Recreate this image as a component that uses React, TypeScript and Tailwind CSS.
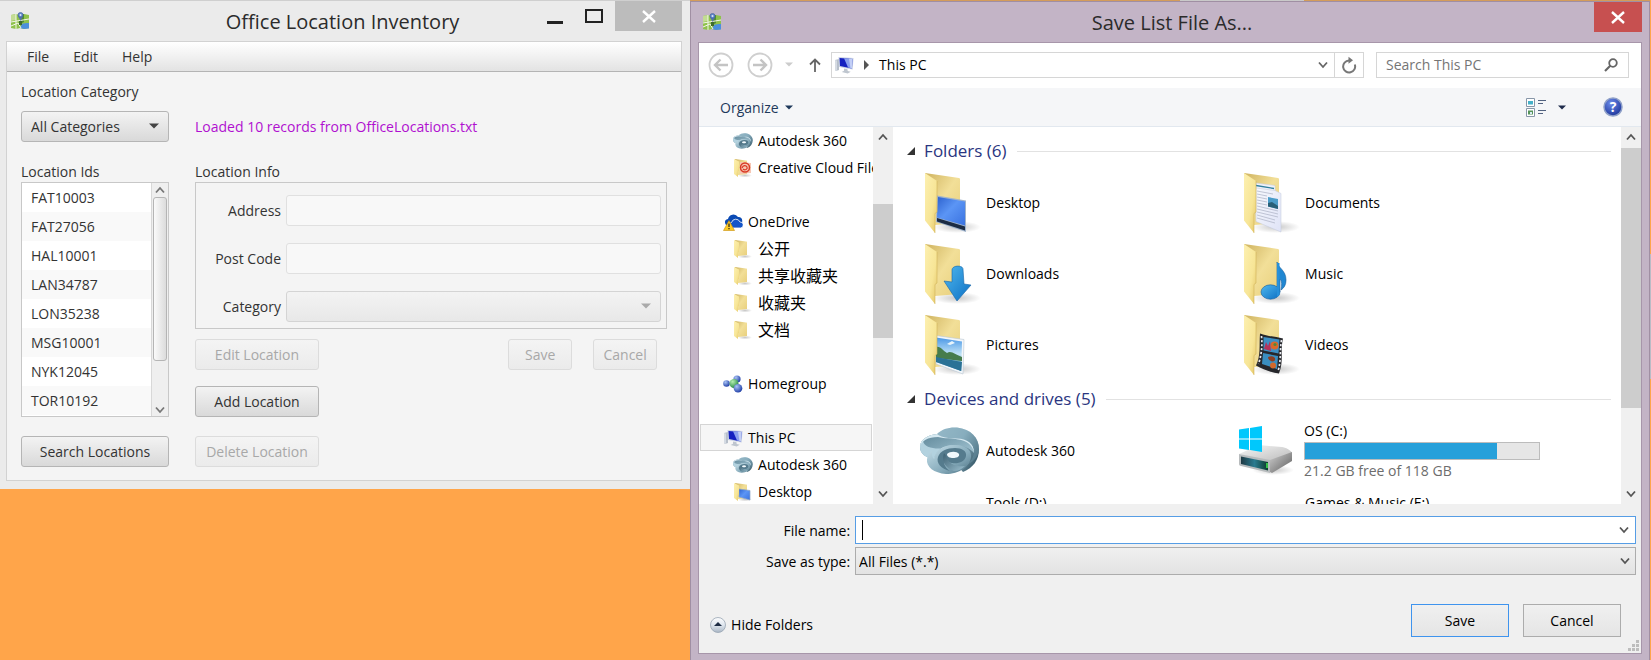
import { useState, type ReactNode } from "react";

const LOCATION_IDS = ["FAT10003", "FAT27056", "HAL10001", "LAN34787", "LON35238", "MSG10001", "NYK12045", "TOR10192"];

/* ---------- shared gradients ---------- */

function Gradients() {
  return (
    <svg className="absolute h-0 w-0" aria-hidden="true">
      <defs>
        <linearGradient id="flap" x1="0" y1="0" x2="1" y2="1">
          <stop offset="0" stopColor="#fdf0b0" />
          <stop offset="0.6" stopColor="#f7e596" />
          <stop offset="1" stopColor="#e3c566" />
        </linearGradient>
        <linearGradient id="back" x1="0" y1="0" x2="1" y2="1">
          <stop offset="0" stopColor="#cfb35f" />
          <stop offset="0.5" stopColor="#f2df98" />
          <stop offset="1" stopColor="#e8cf7c" />
        </linearGradient>
        <linearGradient id="screen" x1="0" y1="0" x2="1" y2="1">
          <stop offset="0" stopColor="#2d62cf" />
          <stop offset="0.45" stopColor="#5b95f5" />
          <stop offset="1" stopColor="#3a72e0" />
        </linearGradient>
        <linearGradient id="arrow" x1="0" y1="0" x2="1" y2="1">
          <stop offset="0" stopColor="#4fb8ee" />
          <stop offset="1" stopColor="#0c6fc4" />
        </linearGradient>
        <linearGradient id="sky" x1="0" y1="0" x2="0" y2="1">
          <stop offset="0" stopColor="#4a97e6" />
          <stop offset="0.5" stopColor="#c2e4f7" />
          <stop offset="1" stopColor="#2f7fae" />
        </linearGradient>
        <linearGradient id="page" x1="0" y1="0" x2="1" y2="1">
          <stop offset="0" stopColor="#f6f8fd" />
          <stop offset="1" stopColor="#dfe3f7" />
        </linearGradient>
        <linearGradient id="swirlBack" x1="0" y1="0" x2="1" y2="0.600">
          <stop offset="0" stopColor="#b4d3e0" />
          <stop offset="0.55" stopColor="#9cc0cf" />
          <stop offset="1" stopColor="#3f6272" />
        </linearGradient>
        <linearGradient id="swirlIn" x1="0" y1="0" x2="1" y2="1">
          <stop offset="0" stopColor="#5f8799" />
          <stop offset="1" stopColor="#a9cad8" />
        </linearGradient>
        <linearGradient id="swirlFront" x1="0" y1="0" x2="1" y2="1">
          <stop offset="0" stopColor="#c9e1eb" />
          <stop offset="0.6" stopColor="#86abbb" />
          <stop offset="1" stopColor="#4d7283" />
        </linearGradient>
        <linearGradient id="swirlDark" x1="0" y1="0" x2="1" y2="1">
          <stop offset="0" stopColor="#3c6072" />
          <stop offset="1" stopColor="#9dc0cf" />
        </linearGradient>
        <linearGradient id="monitor" x1="0" y1="0" x2="1" y2="0">
          <stop offset="0" stopColor="#0a12a0" />
          <stop offset="0.55" stopColor="#1b28d8" />
          <stop offset="1" stopColor="#86a0f2" />
        </linearGradient>
        <radialGradient id="help" cx="0.4" cy="0.3" r="0.8">
          <stop offset="0" stopColor="#6d8cea" />
          <stop offset="1" stopColor="#142c92" />
        </radialGradient>
        <linearGradient id="driveTop" x1="0" y1="0" x2="1" y2="1">
          <stop offset="0" stopColor="#f7f7f7" />
          <stop offset="1" stopColor="#b9b9b9" />
        </linearGradient>
        <linearGradient id="driveSide" x1="0" y1="0" x2="1" y2="1">
          <stop offset="0" stopColor="#cfcfcf" />
          <stop offset="1" stopColor="#5c5c5c" />
        </linearGradient>
        <linearGradient id="driveFace" x1="0" y1="0" x2="1" y2="0">
          <stop offset="0" stopColor="#1f3a44" />
          <stop offset="0.5" stopColor="#2a7b90" />
          <stop offset="1" stopColor="#0d3a2c" />
        </linearGradient>
        <radialGradient id="shade">
          <stop offset="0" stopColor="#000" stopOpacity="0.22" />
          <stop offset="1" stopColor="#000" stopOpacity="0" />
        </radialGradient>
        <radialGradient id="blueBall" cx="0.35" cy="0.3" r="0.8">
          <stop offset="0" stopColor="#a9c4f5" />
          <stop offset="1" stopColor="#12319f" />
        </radialGradient>
        <radialGradient id="greenBall" cx="0.35" cy="0.3" r="0.8">
          <stop offset="0" stopColor="#b4eeb0" />
          <stop offset="1" stopColor="#17803a" />
        </radialGradient>
        <linearGradient id="knob" x1="0" y1="0" x2="0" y2="1">
          <stop offset="0" stopColor="#fdfdfe" />
          <stop offset="0.5" stopColor="#dfe6ee" />
          <stop offset="1" stopColor="#a9b6c4" />
        </linearGradient>
      </defs>
    </svg>
  );
}

/* ---------- icons ---------- */

function MapIcon() {
  return (
    <svg viewBox="0 0 20 18" className="h-[18px] w-5 shrink-0" aria-hidden="true">
      <path d="M1 3l5-1 4 1 4-1 5 1v13l-5 1-4-1-4 1-5-1z" fill="#8fc24c" />
      <path d="M1 3l5-1v6L1 9z" fill="#c3dc93" />
      <path d="M10 3l4-1v8l-4 2z" fill="#4f8a34" />
      <path d="M12 12c2-1 4-1 7-1v5.500l-5 .5-4-1z" fill="#4c8fdc" />
      <path d="M1 10l18-3M6 2v15M1 14l7-3 3 5" stroke="#f4f6ea" strokeWidth="1" fill="none" />
      <path d="M10.500 9L8.200 4.500h4.600z" fill="#5672a8" />
      <circle cx="10.500" cy="2.900" r="2.500" fill="#5f86cc" stroke="#3d5c98" strokeWidth="0.600" />
      <circle cx="10.500" cy="2.900" r="1" fill="#dfe8f7" />
      <path d="M9 9h3v4H9z" fill="#3f6b2c" />
    </svg>
  );
}

function PcIcon() {
  return (
    <svg viewBox="0 0 20 18" className="h-[18px] w-5 shrink-0" aria-hidden="true">
      <path d="M1 4l4-1v11l-3 1-1-1z" fill="#b7bfca" />
      <path d="M1 4l2 .500v10.500l-2-1z" fill="#d5dbe3" />
      <path d="M4.500 1l15 1-.8 11.500L5 11z" fill="#c9d1e4" />
      <path d="M5.500 2l13 1-.6 9.500L6 10z" fill="#1420c0" />
      <path d="M10 2.300l8.500.7-.6 9.500-3.900-.9z" fill="#8aa0ee" />
      <path d="M15 2.700l3.500.3-.6 9.500-1.400-.3z" fill="#c3cff6" />
      <path d="M10 12.500l3.500.8.2 1.700 3 .7-3 1.800-6-1.500 2.300-1.200z" fill="#bfc6cf" />
    </svg>
  );
}

function SwirlIcon({ className }: { className: string }) {
  return (
    <svg viewBox="0 0 60 48" className={className} aria-hidden="true">
      <path d="M17 7C22 2 29 0 37 0.500 51 2 59 11 59 22c0 11-6 19-16 23L30 30z" fill="url(#swirlBack)" />
      <path d="M17 7c7 5 15 4 22 5 8 1 14 5 15 12 0 6-3 11-8 14 6-2 13-8 13-16C59 11 51 2 37 .5 29 0 22 2 17 7z" fill="#6f97a9" opacity="0.450" />
      <path d="M17 7C8 8 0 12 0 20c0 7 6 11 14 12 2-9 10-14 20-14 9 0 16 3 20 8 0-10-7-14-17-14.500C29 11 22 11 17 7z" fill="url(#swirlIn)" />
      <path d="M3 13c-2 2-3 4-3 7 0 7 6 11 14 12 1-5 4-8 7-10.500C13 22 3 20 3 13z" fill="#b3d2df" />
      <path d="M17 7C8 8 0 12 0 20c1-6 8-10 18-10 7 2 14 1 20 2.500 9 1 15 6 16 13.500 0-10-7-14-17-14.500C29 11 22 11 17 7z" fill="#d6e9f1" />
      <path d="M14 32c1-8 9-14 20-14 10 0 18 4 17 12-1 10-12 17-25 17C14 46 6 40 7 32c1-4 3-7 6-9-2 3-1 7 1 9z" fill="url(#swirlFront)" />
      <path d="M18 30c2-6 9-9 17-9 7 0 12 3 11 8-1 6-8 8-14 7-4 0-7-3-6-7-4 5-2 11 4 15-9-2-14-8-12-14z" fill="#557b8d" />
      <path d="M24 26c-3 8 1 15 10 18 4 0 8-2 11-5-7 1-14-1-17-6-1-2-2-5-4-7z" fill="url(#swirlDark)" />
      <path d="M27 27c3-3 10-3 12 0 1 3-3 4-6 4s-6-1-6-4z" fill="#f2f9fc" />
    </svg>
  );
}

type FolderKind = "desktop" | "downloads" | "pictures" | "documents" | "music" | "videos";

function FolderIcon({ kind }: { kind: FolderKind }) {
  return (
    <svg viewBox="0 0 61 62" className="h-[62px] w-[61px] shrink-0" aria-hidden="true">
      <ellipse cx="32" cy="55" rx="24" ry="6" fill="url(#shade)" />
      <path d="M0 1l34 5c1 0 1 1 1 2v43l-25 2z" fill="url(#back)" />
      {kind === "desktop" && (
        <g>
          <path d="M12 23.500l29 5V60L11 50z" fill="#9fb3cc" />
          <path d="M13 25l27 4.500v24L12 45.500z" fill="url(#screen)" />
          <path d="M12 46l28 8.500v4L12 49.500z" fill="#1c2c44" />
        </g>
      )}
      {kind === "downloads" && (
        <path d="M27 27c0-5 11-5 11-1l1 15 7 1-14 16-13-20 8 1z" fill="url(#arrow)" stroke="#1565a8" strokeWidth="0.600" />
      )}
      {kind === "pictures" && (
        <g>
          <path d="M11 21.500l28 4-1 34.500-27-10z" fill="#f2f6fa" stroke="#b9c6d2" strokeWidth="0.600" />
          <path d="M11 23.500l26 4-.8 29.500L11 48z" fill="url(#sky)" />
          <path d="M11 33c5-1 7 4 11 6 4-3 9 2 15 4v4L11 44z" fill="#467c4c" />
          <path d="M11 43l26 5-.8 9L11 48z" fill="#2b7296" />
          <path d="M22 30l5-3 3 2-5 2z" fill="#e9f5fc" />
        </g>
      )}
      {kind === "documents" && (
        <g>
          <path d="M12 11l19 2.500 1 30H12z" fill="#eef1fa" stroke="#c2c9d8" strokeWidth="0.500" />
          <path d="M12 12.800l18 3v1.400l-18-3z" fill="#2f7f9e" />
          <path d="M12 16l19 2.500 6 3V60L12 49.500z" fill="url(#page)" stroke="#c3c8da" strokeWidth="0.500" />
          <path d="M13 19l16 3M13 22l10 2M13 25l10 2M13 28l10 2M13 31l10 2M13 34l21 5M13 37l21 5M13 40l21 5M13 43l18 5M13 46l18 5" stroke="#b3b8ca" strokeWidth="0.800" />
          <path d="M24 25l10 2v10l-10-2.500z" fill="#4b9cc9" />
          <path d="M24 31l4-1 6 4v3l-10-2.500z" fill="#285f78" />
        </g>
      )}
      {kind === "music" && (
        <g>
          <path d="M33 19c1 6 9 8 9 18 0 5-2 8-5 10 1-5 1-9-1-11v13h-3z" fill="#2087d2" stroke="#125d9c" strokeWidth="0.600" />
          <ellipse cx="26.500" cy="49" rx="9.500" ry="7.200" fill="url(#arrow)" stroke="#125d9c" strokeWidth="0.600" />
          <path d="M33 20h2.500v32L33 54z" fill="#2690da" />
        </g>
      )}
      {kind === "videos" && (
        <g>
          <path d="M16 19.500c8 3 15 3 23 5-3 13 1 22-4 35-8-1-16-4-23-8 5-10 3-20 4-32z" fill="#26272b" />
          <path d="M19.500 23l16 2.500-1 14-15-3z" fill="#3c8fc4" />
          <path d="M19 39l15 3-1 13-15-5z" fill="#3a8ec0" />
          <path d="M20 35l2-7 2 4 2-5 1 10z" fill="#b5325c" />
          <circle cx="30.500" cy="31.500" r="4" fill="#d9682a" />
          <circle cx="31" cy="30.500" r="1.600" fill="#53883a" />
          <path d="M24 43c4-2 8 0 7 3s-7 1-7-3z" fill="#8b3f23" />
          <circle cx="29" cy="51.500" r="3" fill="#d2692b" />
          <path d="M17.500 22c1 10 0 19-3 28M37.500 26c-2 11 0 20-3.500 31" stroke="#e8eaf0" strokeWidth="1.700" strokeDasharray="2.200 1.800" fill="none" />
        </g>
      )}
      <path d="M0 1l12 8v31l-2 1.500V61L0 48.500z" fill="url(#flap)" />
      <path d="M12 9v31l-2 1.500V61" stroke="#d0b258" strokeWidth="0.600" fill="none" />
    </svg>
  );
}

function SmallFolder({ children }: { children?: ReactNode }) {
  return (
    <svg viewBox="0 0 20 20" className="h-5 w-5 shrink-0" aria-hidden="true">
      <ellipse cx="12" cy="17.500" rx="7" ry="2" fill="url(#shade)" />
      <path d="M2 1l11 1.500c1 0 1 .5 1 1V16l-9 1z" fill="url(#back)" />
      {children}
      <path d="M1 1l5 2.500v9.500l-1 .5V19l-4-3z" fill="url(#flap)" />
    </svg>
  );
}

function OneDriveIcon() {
  return (
    <svg viewBox="0 0 20 18" className="h-[18px] w-5 shrink-0" aria-hidden="true">
      <path d="M2 10a3.500 3.500 0 013-4 5.500 5.500 0 0110-2 4 4 0 01.5 8H3z" fill="#0b4ab4" />
      <path d="M6 14a3.500 3.500 0 012.500-4.500A4.500 4.500 0 0117 9a2.800 2.800 0 01.5 6H7z" fill="#1455c8" stroke="#fff" strokeWidth="0.800" />
      <path d="M6 7.500L11.500 17.500H.5z" fill="#fbc924" stroke="#c98f0a" strokeWidth="0.600" />
      <path d="M5.400 10.500h1.200v3.500H5.400zM5.400 15h1.200v1.200H5.400z" fill="#222" />
    </svg>
  );
}

function HomegroupIcon() {
  return (
    <svg viewBox="0 0 20 18" className="h-[18px] w-5 shrink-0" aria-hidden="true">
      <circle cx="14" cy="4" r="3.600" fill="url(#blueBall)" />
      <circle cx="3.500" cy="8.500" r="3.300" fill="url(#blueBall)" />
      <circle cx="11" cy="8.500" r="4.500" fill="url(#greenBall)" />
      <circle cx="15" cy="13.300" r="4.300" fill="url(#blueBall)" />
    </svg>
  );
}

function DriveIcon() {
  return (
    <svg viewBox="0 0 56 50" className="h-[50px] w-14 shrink-0" aria-hidden="true">
      <ellipse cx="34" cy="44" rx="21" ry="5" fill="url(#shade)" />
      <path d="M0 28l20-9 23 2c3 0 10 4 10 6L31 36z" fill="url(#driveTop)" />
      <path d="M31 34l22-8v9L33 47l-2-1z" fill="url(#driveSide)" />
      <path d="M0 28l31 6v13L2 40c-1 0-2-1-2-2z" fill="#b7bbbd" />
      <path d="M2 30.500l27 5.500v8.500L2 38z" fill="url(#driveFace)" />
      <path d="M27 37h2v5h-2z" fill="#35c14a" />
      <path d="M0 3.500L10 2v10.500H0zM11 1.900L23 0v12.500H11zM0 13.500h10V24l-10-1.500zM11 13.500h12V26l-12-1.900z" fill="#00c8fc" />
    </svg>
  );
}

function Chevron({ up = false, className = "" }: { up?: boolean; className?: string }) {
  return (
    <svg viewBox="0 0 10 8" className={`h-2 w-2.5 ${className}`} aria-hidden="true">
      <path d={up ? "M1 6.500l4-4.500 4 4.500" : "M1 1.500L5 6l4-4.500"} fill="none" stroke="currentColor" strokeWidth="1.800" />
    </svg>
  );
}

function Caret({ className = "" }: { className?: string }) {
  return (
    <svg viewBox="0 0 10 6" className={className} aria-hidden="true">
      <path d="M0 .5h10L5 5.500z" fill="currentColor" />
    </svg>
  );
}

function Cross() {
  return (
    <svg viewBox="0 0 14 13" className="h-[13px] w-3.5" aria-hidden="true">
      <path d="M1 1l12 11M13 1L1 12" stroke="currentColor" strokeWidth="2.400" />
    </svg>
  );
}

/* ---------- Office Location Inventory window ---------- */

function FxButton({ children, disabled = false, className = "" }: { children: ReactNode; disabled?: boolean; className?: string }) {
  return (
    <button
      type="button"
      disabled={disabled}
      className={`h-[31px] rounded-[3px] border border-[#b5b5b5] bg-linear-to-b from-[#f3f3f3] to-[#d9d9d9] whitespace-nowrap disabled:border-[#dcdcdc] disabled:from-[#f4f4f4] disabled:to-[#ebebeb] disabled:text-[#a8a8a8] ${className}`}
    >
      {children}
    </button>
  );
}

function InventoryWindow() {
  const [category, setCategory] = useState("All Categories");
  return (
    <section aria-label="Office Location Inventory" className="flex flex-col self-start border-t border-[#cfcfcf] bg-[#ebebeb] pr-2 pb-2 pl-1.5 text-[14px] text-[#333]">
      <header className="flex h-10 shrink-0 items-center pl-1">
        <MapIcon />
        <h1 className="flex-1 pt-0.5 pl-[118px] text-center text-[20px] leading-6 whitespace-nowrap text-[#2b2b2b]">Office Location Inventory</h1>
        <div className="flex self-start">
          <button type="button" aria-label="Minimize" className="flex h-[30px] w-9 items-center justify-center pt-3">
            <span className="h-[3px] w-4 bg-[#222]" />
          </button>
          <button type="button" aria-label="Maximize" className="flex h-[30px] w-[42px] items-center justify-center">
            <span className="h-3.5 w-[18px] border-2 border-[#222]" />
          </button>
          <button type="button" aria-label="Close" className="flex h-[30px] w-[67px] items-center justify-center bg-[#bcbcbc] text-white">
            <Cross />
          </button>
        </div>
      </header>

      <div className="flex flex-col border border-[#d2d2d2] bg-[#f4f4f4]">
        <nav className="flex h-[30px] items-center gap-6 border-b border-[#b4b4b4] bg-linear-to-b from-white to-[#e3e3e3] px-5">
          <button type="button">File</button>
          <button type="button">Edit</button>
          <button type="button">Help</button>
        </nav>

        <div className="flex gap-[26px] px-3.5 pt-[9px] pb-[13px]">
          <div className="flex w-[148px] shrink-0 flex-col">
            <label htmlFor="category-filter" className="mb-[9px] leading-[21px]">Location Category</label>
            <div className="relative">
              <select
                id="category-filter"
                value={category}
                onChange={(e) => setCategory(e.target.value)}
                className="block h-[31px] w-full appearance-none rounded-[3px] border border-[#b5b5b5] bg-linear-to-b from-[#f3f3f3] to-[#d9d9d9] px-[9px]"
              >
                <option>All Categories</option>
              </select>
              <Caret className="pointer-events-none absolute top-3 right-2.5 h-1.5 w-2.5 text-[#444]" />
            </div>
            <h2 id="ids-heading" className="mt-[19px] leading-[21px]">Location Ids</h2>
            <div className="flex h-[235px] overflow-hidden border border-[#c8c8c8] bg-white">
              <ul aria-labelledby="ids-heading" className="flex-1">
                {LOCATION_IDS.map((id) => (
                  <li key={id} className="h-[29px] pl-[9px] leading-[29px] even:bg-[#f9f9f9]">{id}</li>
                ))}
              </ul>
              <div className="flex w-[17px] flex-col items-center border-l border-[#d8d8d8] bg-[#efefef] text-[#777]">
                <Chevron up className="mt-[3px] mb-[3px]" />
                <div className="h-[164px] w-3.5 rounded-[3px] border border-[#b5b5b5] bg-linear-to-r from-[#fafafa] to-[#dcdcdc]" />
                <Chevron className="mt-auto mb-0.5" />
              </div>
            </div>
            <FxButton className="mt-[19px] w-full">Search Locations</FxButton>
          </div>

          <div className="flex min-w-0 flex-1 flex-col">
            <p role="status" className="mt-[30px] h-[31px] leading-[31px] whitespace-nowrap text-[#b010d0]">Loaded 10 records from OfficeLocations.txt</p>
            <h2 className="mt-[19px] leading-[21px]">Location Info</h2>
            <div className="grid grid-cols-[85px_1fr] items-center gap-x-[5px] gap-y-[17px] border border-[#c8c8c8] pt-3 pr-[5px] pb-1.5">
              <label htmlFor="address" className="text-right">Address</label>
              <input id="address" disabled className="h-[31px] min-w-0 rounded-[3px] border border-[#e0e0e0] bg-[#f8f8f8] px-2" />
              <label htmlFor="postcode" className="text-right">Post Code</label>
              <input id="postcode" disabled className="h-[31px] min-w-0 rounded-[3px] border border-[#e0e0e0] bg-[#f8f8f8] px-2" />
              <label htmlFor="category" className="text-right">Category</label>
              <div className="relative">
                <select id="category" disabled className="block h-[31px] w-full appearance-none rounded-[3px] border border-[#d4d4d4] bg-linear-to-b from-[#f3f3f3] to-[#e8e8e8] opacity-100" />
                <Caret className="pointer-events-none absolute top-3 right-2.5 h-1.5 w-2.5 text-[#aaa]" />
              </div>
            </div>
            <div className="mt-2.5 flex gap-[21px] pr-2.5">
              <FxButton disabled className="mr-auto w-[124px]">Edit Location</FxButton>
              <FxButton disabled className="w-16">Save</FxButton>
              <FxButton disabled className="w-16">Cancel</FxButton>
            </div>
            <FxButton className="mt-4 w-[124px]">Add Location</FxButton>
            <FxButton disabled className="mt-[19px] w-[124px]">Delete Location</FxButton>
          </div>
        </div>
      </div>
    </section>
  );
}

/* ---------- Save dialog ---------- */

function NavItem({ icon, label, child = false, selected = false }: { icon: ReactNode; label: ReactNode; child?: boolean; selected?: boolean }) {
  return (
    <li className={`flex h-[27px] shrink-0 items-center gap-[5px] border whitespace-nowrap ${child ? "pl-8" : "pl-[22px]"} ${selected ? "border-[#d5d5d5] bg-[#f6f6f6]" : "border-transparent"}`}>
      {icon}
      <span>{label}</span>
    </li>
  );
}

const ONEDRIVE_FOLDERS = ["公开", "共享收藏夹", "收藏夹", "文档"];

function NavPane() {
  return (
    <ul className="flex w-[174px] shrink-0 flex-col overflow-hidden px-px">
      <NavItem child icon={<SwirlIcon className="h-4 w-5 shrink-0" />} label="Autodesk 360" />
      <NavItem
        child
        label="Creative Cloud Files"
        icon={
          <SmallFolder>
            <path d="M7 4l11 1v10l-11 1z" fill="#f6c7b4" />
            <circle cx="12" cy="9.500" r="4.500" fill="none" stroke="#d93a26" strokeWidth="1.500" />
            <path d="M9 10c1-3 4-3 5-1s-2 4-4 2" stroke="#d93a26" strokeWidth="1.200" fill="none" />
          </SmallFolder>
        }
      />
      <li aria-hidden="true" className="h-[27px] shrink-0" />
      <NavItem icon={<OneDriveIcon />} label="OneDrive" />
      {ONEDRIVE_FOLDERS.map((name) => (
        <NavItem key={name} child icon={<SmallFolder />} label={<span className="text-[16px] leading-6">{name}</span>} />
      ))}
      <li aria-hidden="true" className="h-[27px] shrink-0" />
      <NavItem icon={<HomegroupIcon />} label="Homegroup" />
      <li aria-hidden="true" className="h-[27px] shrink-0" />
      <NavItem selected icon={<PcIcon />} label="This PC" />
      <NavItem child icon={<SwirlIcon className="h-4 w-5 shrink-0" />} label="Autodesk 360" />
      <NavItem child icon={<SmallFolder><path d="M6 7l11 1.500V18L6 15z" fill="url(#screen)" stroke="#8ba3c4" strokeWidth="0.700" /></SmallFolder>} label="Desktop" />
    </ul>
  );
}

function GroupHeading({ children }: { children: ReactNode }) {
  return (
    <h2 className="flex h-6 items-center pl-3.5 text-[17px] leading-6 whitespace-nowrap text-[#2a3580]">
      <svg viewBox="0 0 8 8" className="mr-[9px] h-2 w-2" aria-hidden="true">
        <path d="M8 0v8H0z" fill="#333" />
      </svg>
      {children}
      <span className="ml-2.5 h-px flex-1 bg-[#e2e2e2]" />
    </h2>
  );
}

const FOLDERS: { kind: FolderKind; label: string }[] = [
  { kind: "desktop", label: "Desktop" },
  { kind: "documents", label: "Documents" },
  { kind: "downloads", label: "Downloads" },
  { kind: "music", label: "Music" },
  { kind: "pictures", label: "Pictures" },
  { kind: "videos", label: "Videos" },
];

function ScrollBar({ before, thumb }: { before: string; thumb: string }) {
  return (
    <div className="flex w-5 shrink-0 flex-col items-center bg-[#f0f0f0] text-[#555]">
      <Chevron up className="mt-1.5 mb-[7px]" />
      <div className={`w-full shrink-0 ${before}`} />
      <div className={`w-full shrink-0 bg-[#cdcdcd] ${thumb}`} />
      <Chevron className="mt-auto mb-1.5" />
    </div>
  );
}

function FilePane() {
  return (
    <div className="min-w-0 flex-1 overflow-hidden pt-3 pr-2.5">
      <GroupHeading>Folders (6)</GroupHeading>
      <ul className="mt-1 grid grid-cols-2 pr-12 pl-8">
        {FOLDERS.map(({ kind, label }) => (
          <li key={kind} className="flex h-[71px] items-center">
            <FolderIcon kind={kind} />
            <span>{label}</span>
          </li>
        ))}
      </ul>
      <div className="mt-[7px]">
        <GroupHeading>Devices and drives (5)</GroupHeading>
      </div>
      <ul className="mt-1 grid grid-cols-2 pr-[53px] pl-[27px]">
        <li className="flex h-[71px] items-center gap-1.5">
          <SwirlIcon className="h-12 w-[60px] shrink-0" />
          <span>Autodesk 360</span>
        </li>
        <li className="flex h-[71px] items-center gap-[9px]">
          <DriveIcon />
          <div className="min-w-0">
            <div className="leading-5">OS (C:)</div>
            <div role="meter" aria-label="Space used on OS (C:)" aria-valuenow={82} className="my-px h-[18px] w-[236px] border border-[#bcbcbc] bg-[#e6e6e6]">
              <div className="h-full w-[82%] bg-[#26a0da]" />
            </div>
            <div className="leading-5 text-[#6d6d6d]">21.2 GB free of 118 GB</div>
          </div>
        </li>
        <li className="h-[71px] pt-[7px] pl-[66px] leading-5">Tools (D:)</li>
        <li className="h-[71px] pt-[7px] pl-[66px] leading-5">Games &amp; Music (E:)</li>
      </ul>
    </div>
  );
}

function SaveDialog() {
  const [fileName, setFileName] = useState("");
  return (
    <section role="dialog" aria-label="Save List File As..." className="flex min-h-0 min-w-0 flex-1 flex-col border-x border-t border-[#a08fa3] bg-[#c3b4c6] px-[7px] pb-1.5 text-[14px] text-black">
      <header className="flex h-10 shrink-0 items-center pl-1">
        <MapIcon />
        <h1 className="flex-1 pt-0.5 pl-7 text-center text-[20px] leading-6 text-[#2b2b2b]">Save List File As...</h1>
        <button type="button" aria-label="Close" className="flex h-[30px] w-12 items-center justify-center self-start bg-[#c75050] text-white">
          <Cross />
        </button>
      </header>

      <div className="flex min-h-0 flex-1 flex-col border border-[#a796aa] bg-[#f0f0f0]">
        <div className="flex h-[45px] shrink-0 items-center bg-white pr-3 pb-0.5 pl-[9px] text-[#888]">
          <button type="button" aria-label="Back" disabled>
            <svg viewBox="0 0 26 26" className="h-[26px] w-[26px]" aria-hidden="true">
              <circle cx="13" cy="13" r="11.500" fill="none" stroke="#cfcfcf" strokeWidth="1.800" />
              <path d="M20 13H8M12.500 7.500L7 13l5.500 5.500" fill="none" stroke="#c4c4c4" strokeWidth="2.400" />
            </svg>
          </button>
          <button type="button" aria-label="Forward" disabled className="ml-[13px]">
            <svg viewBox="0 0 26 26" className="h-[26px] w-[26px]" aria-hidden="true">
              <circle cx="13" cy="13" r="11.500" fill="none" stroke="#cfcfcf" strokeWidth="1.800" />
              <path d="M6 13h12M13.500 7.500L19 13l-5.500 5.500" fill="none" stroke="#c4c4c4" strokeWidth="2.400" />
            </svg>
          </button>
          <button type="button" aria-label="Recent locations" className="ml-3">
            <Caret className="h-[5px] w-2 text-[#ccc]" />
          </button>
          <button type="button" aria-label="Up" className="ml-4">
            <svg viewBox="0 0 12 14" className="h-3.5 w-3" aria-hidden="true">
              <path d="M6 14V2M1 6.500L6 1.500l5 5" fill="none" stroke="#666" strokeWidth="1.800" />
            </svg>
          </button>
          <div className="ml-2.5 flex h-[26px] min-w-0 flex-1 items-center border border-[#d6d6d6] pl-0.5">
            <PcIcon />
            <svg viewBox="0 0 5 10" className="ml-2.5 h-2.5 w-[5px]" aria-hidden="true">
              <path d="M0 0v10l5-5z" fill="#555" />
            </svg>
            <span className="ml-2.5 flex-1 text-black">This PC</span>
            <Chevron className="mr-1.5 text-[#666]" />
            <button type="button" aria-label="Refresh" className="flex h-full w-[29px] items-center justify-center border-l border-[#d6d6d6]">
              <svg viewBox="0 0 16 18" className="h-[18px] w-4" aria-hidden="true">
                <path d="M13.800 8.500A6 6 0 118 4.500h2" fill="none" stroke="#777" strokeWidth="2" />
                <path d="M7.500.8l4.500 3.500-4.500 3.500z" fill="#777" />
              </svg>
            </button>
          </div>
          <div className="ml-3 flex h-[26px] w-[253px] items-center border border-[#d6d6d6] pr-2.5 pl-[9px]">
            <input aria-label="Search This PC" placeholder="Search This PC" className="min-w-0 flex-1 outline-none placeholder:text-[#757575]" />
            <svg viewBox="0 0 14 14" className="h-3.5 w-3.5" aria-hidden="true">
              <circle cx="9" cy="5" r="3.800" fill="none" stroke="#666" strokeWidth="1.800" />
              <path d="M6.500 7.500L1 13" stroke="#666" strokeWidth="2.200" />
            </svg>
          </div>
        </div>

        <div className="flex h-[39px] shrink-0 items-center border-b border-[#e2e8ef] bg-[#f5f6f8] pr-[18px] pl-[21px]">
          <button type="button" className="mr-auto flex items-center gap-1.5 text-[#1e395b]">
            Organize
            <Caret className="h-[5px] w-2" />
          </button>
          <button type="button" aria-label="Change your view" className="mr-[37px] flex items-center gap-3 text-[#1e2b4b]">
            <svg viewBox="0 0 20 19" className="h-[19px] w-5" aria-hidden="true">
              <path d="M.5.5h8v8h-8zM.5 10.500h8v8h-8z" fill="#fff" stroke="#8796a8" />
              <path d="M2 3h5v3.500H2z" fill="#45b0c8" />
              <path d="M2 12.500h5v4H2z" fill="#55935a" />
              <path d="M4 14h2v2H4z" fill="#d8eaf4" />
              <path d="M12 2.500h8M12 5.500h5M12 12.500h8M12 15.500h5" stroke="#516280" />
            </svg>
            <Caret className="h-[5px] w-2" />
          </button>
          <button type="button" aria-label="Get help" className="flex">
            <svg viewBox="0 0 20 20" className="h-5 w-5" aria-hidden="true">
              <circle cx="10" cy="10" r="9" fill="url(#help)" stroke="#8fa0c8" strokeWidth="1.500" />
              <text x="10" y="15" textAnchor="middle" className="fill-white text-[14px] font-bold">?</text>
            </svg>
          </button>
        </div>

        <div className="flex min-h-0 flex-1 bg-white">
          <NavPane />
          <ScrollBar before="h-[56px]" thumb="h-[134px]" />
          <FilePane />
          <ScrollBar before="h-0" thumb="h-[260px]" />
        </div>

        <form className="shrink-0 pt-3" onSubmit={(e) => e.preventDefault()}>
          <div className="grid grid-cols-[151px_1fr] items-center gap-x-[5px] gap-y-[3px] pr-[5px]">
            <label htmlFor="file-name" className="text-right">File name:</label>
            <div className="flex h-7 items-center border border-[#569de5] bg-white pr-1.5 pl-1.5">
              <span className="h-5 w-px bg-black" />
              <input id="file-name" value={fileName} onChange={(e) => setFileName(e.target.value)} className="min-w-0 flex-1 caret-transparent outline-none" />
              <Chevron className="text-[#555]" />
            </div>
            <label htmlFor="file-type" className="text-right">Save as type:</label>
            <div className="relative">
              <select id="file-type" className="block h-7 w-full appearance-none border border-[#acacac] bg-linear-to-b from-[#f0f0f0] to-[#e3e3e3] px-[3px]">
                <option>All Files (*.*)</option>
              </select>
              <Chevron className="pointer-events-none absolute top-2.5 right-1.5 text-[#555]" />
            </div>
          </div>
          <div className="mt-[29px] flex items-start gap-3.5 pr-5 pb-4 pl-[11px]">
            <button type="button" className="mt-2.5 mr-auto flex items-center gap-[5px]">
              <svg viewBox="0 0 16 16" className="h-4 w-4" aria-hidden="true">
                <circle cx="8" cy="8" r="7.500" fill="url(#knob)" stroke="#98a4b2" strokeWidth="0.800" />
                <path d="M8 5l4 4H4z" fill="#1d2c44" />
              </svg>
              Hide Folders
            </button>
            <button type="submit" className="h-[33px] w-[98px] border border-[#3f94ee] bg-linear-to-b from-[#f0f0f0] to-[#e5e5e5]">Save</button>
            <button type="button" className="h-[33px] w-[98px] border border-[#acacac] bg-linear-to-b from-[#f0f0f0] to-[#e5e5e5]">Cancel</button>
          </div>
          <div className="relative">
            <svg viewBox="0 0 11 11" className="absolute right-0.5 bottom-0.5 h-[11px] w-[11px]" aria-hidden="true">
              <path d="M8 0h3v3H8zM4 4h3v3H4zM8 4h3v3H8zM0 8h3v3H0zM4 8h3v3H4zM8 8h3v3H8z" fill="#bdbdbd" />
            </svg>
          </div>
        </form>
      </div>
    </section>
  );
}

export default function App() {
  return (
    <main className="flex h-screen bg-[#ffa54a] font-['Open_Sans','Noto_Sans_CJK_SC',sans-serif]">
      <Gradients />
      <div className="flex w-[41.8%] shrink-0 flex-col [&>section]:w-full">
        <InventoryWindow />
      </div>
      <div className="flex min-w-0 flex-1 flex-col">
        <div className="flex h-px shrink-0 bg-[#d49c5a]">
          <span className="ml-[51%] w-[13%] bg-[#c9c9c9]" />
        </div>
        <SaveDialog />
      </div>
      <div className="flex w-px shrink-0 flex-col">
        <span className="mt-[254px] h-[125px] bg-[#b9bcc6]" />
      </div>
    </main>
  );
}
